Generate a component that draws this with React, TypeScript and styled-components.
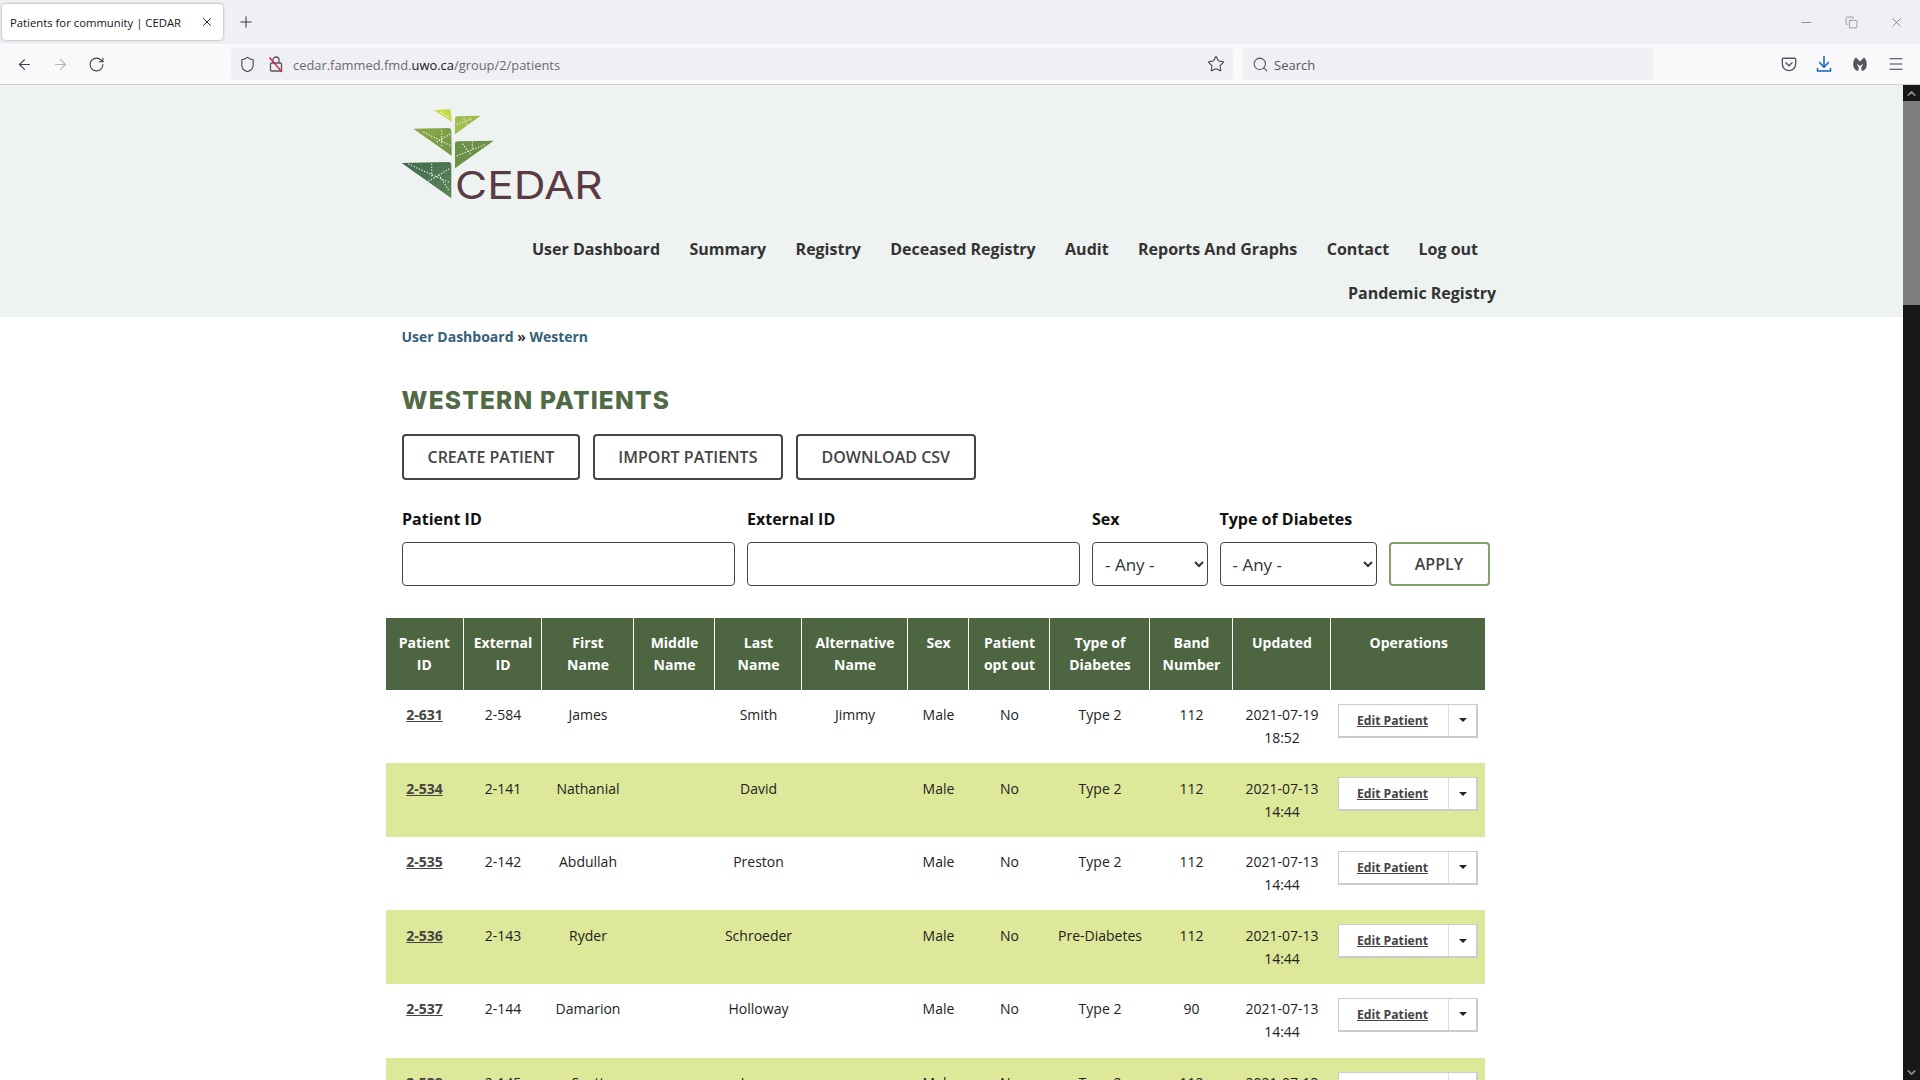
import React from "react";
import styled, { createGlobalStyle } from "styled-components";
import {
  ArrowLeft,
  ArrowRight,
  ChevronDown,
  ChevronUp,
  Copy,
  Menu,
  Minus,
  Plus,
  RotateCw,
  Search,
  Shield,
  Star,
  X,
} from "lucide-react";

const GlobalStyle = createGlobalStyle`
  html, body {
    margin: 0;
    height: 100%;
    overflow: hidden;
    background: #fff;
    font-family: "Open Sans", "Liberation Sans", sans-serif;
  }
  * { box-sizing: border-box; }
`;

const Shell = styled.div`
  display: flex;
  flex-direction: column;
  height: 1080px;
  overflow: hidden;
`;

const TabStrip = styled.div`
  display: flex;
  align-items: center;
  height: 44px;
  padding: 0 0 0 2px;
  background: #f0f0f4;
  flex: none;
`;

const Tab = styled.div`
  display: flex;
  align-items: center;
  justify-content: space-between;
  width: 221px;
  height: 36px;
  padding: 0 9px 0 8px;
  background: #fff;
  border-radius: 4px;
  box-shadow: 0 0 3px rgba(0, 0, 0, 0.35);
  font-size: 11.3px;
  color: #15141a;
`;

const NewTab = styled.div`
  display: flex;
  margin-left: 14px;
  color: #3b3b40;
`;

const WindowButtons = styled.div`
  display: flex;
  align-items: center;
  gap: 31px;
  margin-left: auto;
  padding-right: 16px;
  color: #555;
`;

const Toolbar = styled.div`
  display: flex;
  align-items: center;
  height: 41px;
  padding: 0 15px 0 16px;
  background: #f9f9fb;
  border-bottom: 1px solid #cfcfd3;
  flex: none;
  color: #3f3f45;
`;

const NavIcons = styled.div`
  display: flex;
  gap: 19px;
  width: 215px;
`;

const UrlBar = styled.div`
  display: flex;
  align-items: center;
  width: 1002px;
  height: 32px;
  padding: 0 8px 0 8px;
  background: #f0f0f4;
  border-radius: 4px;
`;

const UrlText = styled.span`
  margin-left: 9px;
  padding-top: 1px;
  font-size: 12.9px;
  color: #6a6a72;
  b {
    font-weight: 400;
    color: #15141a;
  }
`;

const LockIcon = styled.span`
  display: flex;
  margin-left: 12px;
`;

const StarSlot = styled.span`
  display: flex;
  margin-left: auto;
`;

const SearchBar = styled.div`
  display: flex;
  align-items: center;
  gap: 5px;
  width: 410px;
  height: 32px;
  margin-left: 10px;
  padding: 0 9px;
  background: #f0f0f4;
  border-radius: 4px;
  font-size: 13px;
  color: #55555c;
`;

const SearchLabel = styled.span`
  padding-top: 1px;
`;

const ToolIcons = styled.div`
  display: flex;
  align-items: center;
  gap: 18px;
  margin-left: auto;
`;

const Viewport = styled.div`
  display: flex;
  flex: 1;
  min-height: 0;
`;

const Page = styled.div`
  flex: 1;
  min-width: 0;
  overflow: hidden;
  background: #fff;
`;

const ScrollTrack = styled.div`
  display: flex;
  flex-direction: column;
  width: 17px;
  background: #17171a;
  color: #8c8c8c;
`;

const ScrollArrow = styled.div`
  display: flex;
  align-items: center;
  justify-content: center;
  height: 16px;
`;

const ScrollThumb = styled.div`
  height: 204px;
  background: #7d7d7d;
`;

const ScrollGap = styled.div`
  flex: 1;
`;

const SiteHeader = styled.header`
  height: 232px;
  padding-top: 23px;
  background: #eef2f0;
`;

const Wrap = styled.div`
  width: 1099px;
  margin: 0 auto;
`;

const LogoBox = styled.div`
  width: 230px;
  height: 120px;
  margin: -13px 0 0 -13px;
`;

const MainNav = styled.nav`
  display: flex;
  flex-direction: column;
  margin-top: 11.5px;
`;

const NavRow = styled.div<{ $inset: number }>`
  display: flex;
  justify-content: flex-end;
  gap: 29.4px;
  height: 44px;
  align-items: center;
  padding-right: ${(p) => p.$inset}px;
`;

const NavLink = styled.a`
  font-size: 16px;
  font-weight: 700;
  color: #333;
`;

const Crumbs = styled.div`
  margin: 8px 0 0 -0.5px;
  font-size: 14px;
  line-height: 23px;
  font-weight: 700;
  color: #333;
  a {
    color: #33617a;
  }
`;

const Title = styled.h1`
  margin: 36px 0 0 -0.5px;
  font-family: Inter, "Open Sans", sans-serif;
  font-size: 24.5px;
  line-height: 32px;
  font-weight: 800;
  letter-spacing: 1.2px;
  color: #4f6a44;
`;

const Actions = styled.div`
  display: flex;
  gap: 13px;
  margin-top: 18px;
`;

const ActionButton = styled.button`
  height: 46px;
  padding: 0 23.5px;
  background: #fff;
  border: 2px solid #444;
  border-radius: 4px;
  font-family: inherit;
  font-size: 16px;
  font-weight: 600;
  color: #444;
`;

const Filters = styled.form`
  display: flex;
  align-items: flex-end;
  gap: 12px;
  margin-top: 26.4px;
`;

const Field = styled.label<{ $w: number }>`
  display: flex;
  flex-direction: column;
  width: ${(p) => p.$w}px;
  font-size: 16px;
  font-weight: 700;
  line-height: 27px;
  color: #111;
`;

const TextInput = styled.input`
  height: 44px;
  margin-top: 9px;
  border: 1px solid #444;
  border-radius: 4px;
  background: #fff;
`;

const Select = styled.select`
  height: 44px;
  margin-top: 9px;
  padding: 0 8px;
  border: 1px solid #444;
  border-radius: 4px;
  background: #fff;
  font-family: inherit;
  font-size: 17px;
  color: #333;
`;

const ApplyButton = styled.button`
  width: 101px;
  height: 44px;
  background: #fff;
  border: 2px solid #83a070;
  border-radius: 4px;
  font-family: inherit;
  font-size: 16px;
  font-weight: 600;
  color: #444;
`;

const TableWrap = styled.div`
  margin: 32px 0 0 -16px;
`;

const Table = styled.table`
  width: 1099px;
  table-layout: fixed;
  border-collapse: collapse;
  font-size: 14px;
  color: #222;
`;

const Th = styled.th`
  height: 71px;
  padding: 14px 3px 14px 5px;
  vertical-align: top;
  background: #4e6542;
  border-left: 1px solid #fff;
  font-size: 14px;
  line-height: 21.6px;
  font-weight: 700;
  color: #fff;
  &:first-child {
    padding: 14px 4px;
    border-left: 0;
  }
`;

const Row = styled.tr<{ $striped: boolean }>`
  background: ${(p) => (p.$striped ? "#dee89a" : "#fff")};
`;

const Td = styled.td`
  padding: 13.5px 3px 14.1px 5px;
  vertical-align: top;
  text-align: center;
  line-height: 23px;
  &:first-child {
    padding-left: 4px;
    padding-right: 4px;
  }
`;

const IdLink = styled.a`
  font-weight: 700;
  color: #444;
  text-decoration: underline;
`;

const OpsCell = styled.td`
  padding: 14px 7px 0 8px;
  vertical-align: top;
`;

const OpsButton = styled.div`
  display: flex;
  height: 34px;
  background: #fff;
  border-style: solid;
  border-width: 1px 2px 2px 1px;
  border-color: #ccc;
`;

const OpsMain = styled.a`
  flex: 1;
  padding-right: 2px;
  line-height: 32px;
  text-align: center;
  font-size: 12.2px;
  font-weight: 700;
  color: #444;
  text-decoration: underline;
`;

const OpsCaret = styled.span`
  display: flex;
  align-items: center;
  justify-content: center;
  width: 28px;
  border-left: 1px solid #ddd;
  &::before {
    content: "";
    border: 4px solid transparent;
    border-top-color: #222;
    border-bottom-width: 0;
  }
`;

const columns = [77, 78, 92, 81, 87, 106, 61, 81, 100, 83, 98, 155];
const headings = [
  ["Patient", "ID"],
  ["External", "ID"],
  ["First", "Name"],
  ["Middle", "Name"],
  ["Last", "Name"],
  ["Alternative", "Name"],
  ["Sex"],
  ["Patient", "opt out"],
  ["Type of", "Diabetes"],
  ["Band", "Number"],
  ["Updated"],
  ["Operations"],
];

const patients = [
  { id: "2-631", ext: "2-584", first: "James", last: "Smith", alt: "Jimmy", type: "Type 2", band: "112", day: "2021-07-19", time: "18:52" },
  { id: "2-534", ext: "2-141", first: "Nathanial", last: "David", alt: "", type: "Type 2", band: "112", day: "2021-07-13", time: "14:44" },
  { id: "2-535", ext: "2-142", first: "Abdullah", last: "Preston", alt: "", type: "Type 2", band: "112", day: "2021-07-13", time: "14:44" },
  { id: "2-536", ext: "2-143", first: "Ryder", last: "Schroeder", alt: "", type: "Pre-Diabetes", band: "112", day: "2021-07-13", time: "14:44" },
  { id: "2-537", ext: "2-144", first: "Damarion", last: "Holloway", alt: "", type: "Type 2", band: "90", day: "2021-07-13", time: "14:44" },
  { id: "2-538", ext: "2-145", first: "Scott", last: "Jones", alt: "", type: "Type 2", band: "112", day: "2021-07-13", time: "14:44" },
];

const navRows = [
  { inset: 23, links: ["User Dashboard", "Summary", "Registry", "Deceased Registry", "Audit", "Reports And Graphs", "Contact", "Log out"] },
  { inset: 5, links: ["Pandemic Registry"] },
];

function dots(x1: number, y1: number, x2: number, y2: number) {
  return <line x1={x1} y1={y1} x2={x2} y2={y2} stroke="#fff" strokeWidth="4.2" strokeLinecap="round" strokeDasharray="0.1 8.5" opacity="0.9" />;
}

function Logo() {
  return (
    <svg width="230" height="120" viewBox="0 0 690 360">
      <defs>
        <linearGradient id="leafLow" x1="0" y1="0" x2="1" y2="1">
          <stop offset="0" stopColor="#3f6a4a" />
          <stop offset="1" stopColor="#5c8558" />
        </linearGradient>
        <linearGradient id="leafMid" x1="0" y1="0" x2="1" y2="1">
          <stop offset="0" stopColor="#8eac49" />
          <stop offset="1" stopColor="#6f9448" />
        </linearGradient>
      </defs>
      <path d="M135 46 L178 42 Q186 42 186 50 L188 80 Z" fill="#c6da4c" />
      <path d="M198 70 Q198 64 205 64 L275 62 L198 118 Z" fill="#a0bc4a" />
      <path d="M73 101 L178 99 Q187 99 187 108 L188 182 Z" fill="url(#leafMid)" />
      <path d="M198 146 Q198 139 205 139 L314 137 L198 220 Z" fill="#6d9049" />
      <path d="M38 204 L178 201 Q187 201 187 210 L187 310 Z" fill="url(#leafLow)" />
      {dots(155, 52, 182, 70)}
      {dots(205, 88, 245, 72)}
      {dots(225, 72, 235, 90)}
      {dots(105, 112, 185, 152)}
      {dots(158, 108, 158, 155)}
      {dots(145, 140, 182, 118)}
      {dots(205, 182, 290, 148)}
      {dots(222, 148, 245, 178)}
      {dots(250, 142, 250, 165)}
      {dots(60, 208, 180, 262)}
      {dots(128, 208, 128, 248)}
      {dots(120, 258, 180, 222)}
      {dots(150, 240, 182, 290)}
      <text x="198" y="312" fontFamily="Inter, sans-serif" fontSize="115" fontWeight="400" fill="#5a3a45" textLength="443" lengthAdjust="spacingAndGlyphs">
        CEDAR
      </text>
    </svg>
  );
}

function PocketIcon() {
  return (
    <svg width="16" height="16" viewBox="0 0 18 18" fill="none" stroke="#55555c" strokeWidth="1.5">
      <path d="M2.500 2.500h13a1 1 0 0 1 1 1v5.500a7.500 7.500 0 0 1-15 0V3.500a1 1 0 0 1 1-1z" />
      <path d="M5.500 7.500L9 11l3.500-3.500" strokeLinecap="round" />
    </svg>
  );
}

function SaveIcon() {
  return (
    <svg width="18" height="18" viewBox="0 0 18 18" fill="none" stroke="#0f62c4" strokeWidth="1.5" strokeLinecap="round" strokeLinejoin="round">
      <path d="M9 1.500V12" />
      <path d="M4.500 7.500L9 12l4.500-4.500" />
      <path d="M2.500 13.500V16h13v-2.500" />
    </svg>
  );
}

function GuardIcon() {
  return (
    <svg width="18" height="18" viewBox="0 0 18 18">
      <path
        d="M5 2.500C2.500 4 1.500 9 2.800 12.500 3.800 15 5.800 16 7.300 15.800L7.800 12.800 5.800 8.800 9 11l3.200-2.200-2 4 .5 3c1.500.2 3.500-.8 4.500-3.300C16.500 9 15.500 4 13 2.500L9 6.500z"
        fill="#55555c"
      />
    </svg>
  );
}

function OpenLockIcon() {
  return (
    <svg width="16" height="18" viewBox="0 0 16 18" fill="none">
      <rect x="2.500" y="8" width="11" height="8" rx="1" stroke="#55555c" strokeWidth="1.300" />
      <path d="M5 8V5a3 3 0 0 1 6 0v3" stroke="#55555c" strokeWidth="1.300" />
      <path d="M1.500 2.500L14 17" stroke="#d7264a" strokeWidth="1.500" />
    </svg>
  );
}

export default function App() {
  return (
    <Shell>
      <GlobalStyle />
      <TabStrip>
        <Tab>
          Patients for community | CEDAR
          <X size={14} strokeWidth={1.6} />
        </Tab>
        <NewTab>
          <Plus size={18} strokeWidth={1.4} />
        </NewTab>
        <WindowButtons>
          <Minus size={15} strokeWidth={1} />
          <Copy size={13} strokeWidth={1} />
          <X size={15} strokeWidth={1} />
        </WindowButtons>
      </TabStrip>
      <Toolbar>
        <NavIcons>
          <ArrowLeft size={17} strokeWidth={1.5} />
          <ArrowRight size={17} strokeWidth={1.5} color="#b4b4b8" />
          <RotateCw size={17} strokeWidth={1.5} />
        </NavIcons>
        <UrlBar>
          <Shield size={17} strokeWidth={1.5} />
          <LockIcon>
            <OpenLockIcon />
          </LockIcon>
          <UrlText>
            cedar.fammed.fmd.<b>uwo.ca</b>/group/2/patients
          </UrlText>
          <StarSlot>
            <Star size={18} strokeWidth={1.4} />
          </StarSlot>
        </UrlBar>
        <SearchBar>
          <Search size={17} strokeWidth={1.5} />
          <SearchLabel>Search</SearchLabel>
        </SearchBar>
        <ToolIcons>
          <PocketIcon />
          <SaveIcon />
          <GuardIcon />
          <Menu size={18} strokeWidth={1.4} />
        </ToolIcons>
      </Toolbar>
      <Viewport>
        <Page>
          <SiteHeader>
            <Wrap>
              <LogoBox>
                <Logo />
              </LogoBox>
              <MainNav>
                {navRows.map((row) => (
                  <NavRow key={row.inset} $inset={row.inset}>
                    {row.links.map((link) => (
                      <NavLink key={link}>{link}</NavLink>
                    ))}
                  </NavRow>
                ))}
              </MainNav>
            </Wrap>
          </SiteHeader>
          <Wrap>
            <Crumbs>
              <a>User Dashboard</a> » <a>Western</a>
            </Crumbs>
            <Title>WESTERN PATIENTS</Title>
            <Actions>
              <ActionButton>CREATE PATIENT</ActionButton>
              <ActionButton>IMPORT PATIENTS</ActionButton>
              <ActionButton>DOWNLOAD CSV</ActionButton>
            </Actions>
            <Filters>
              <Field $w={333}>
                Patient ID
                <TextInput />
              </Field>
              <Field $w={333}>
                External ID
                <TextInput />
              </Field>
              <Field $w={115.5}>
                Sex
                <Select>
                  <option>- Any -</option>
                </Select>
              </Field>
              <Field $w={157}>
                Type of Diabetes
                <Select>
                  <option>- Any -</option>
                </Select>
              </Field>
              <ApplyButton type="button">APPLY</ApplyButton>
            </Filters>
            <TableWrap>
              <Table>
                <colgroup>
                  {columns.map((w, i) => (
                    <col key={i} width={w} />
                  ))}
                </colgroup>
                <thead>
                  <tr>
                    {headings.map((lines) => (
                      <Th key={lines.join(" ")}>
                        {lines.map((line) => (
                          <div key={line}>{line}</div>
                        ))}
                      </Th>
                    ))}
                  </tr>
                </thead>
                <tbody>
                  {patients.map((p, i) => (
                    <Row key={p.id} $striped={i % 2 === 1}>
                      <Td>
                        <IdLink>{p.id}</IdLink>
                      </Td>
                      <Td>{p.ext}</Td>
                      <Td>{p.first}</Td>
                      <Td />
                      <Td>{p.last}</Td>
                      <Td>{p.alt}</Td>
                      <Td>Male</Td>
                      <Td>No</Td>
                      <Td>{p.type}</Td>
                      <Td>{p.band}</Td>
                      <Td>
                        {p.day}
                        <br />
                        {p.time}
                      </Td>
                      <OpsCell>
                        <OpsButton>
                          <OpsMain>Edit Patient</OpsMain>
                          <OpsCaret />
                        </OpsButton>
                      </OpsCell>
                    </Row>
                  ))}
                </tbody>
              </Table>
            </TableWrap>
          </Wrap>
        </Page>
        <ScrollTrack>
          <ScrollArrow>
            <ChevronUp size={13} strokeWidth={3} />
          </ScrollArrow>
          <ScrollThumb />
          <ScrollGap />
          <ScrollArrow>
            <ChevronDown size={13} strokeWidth={3} />
          </ScrollArrow>
        </ScrollTrack>
      </Viewport>
    </Shell>
  );
}
